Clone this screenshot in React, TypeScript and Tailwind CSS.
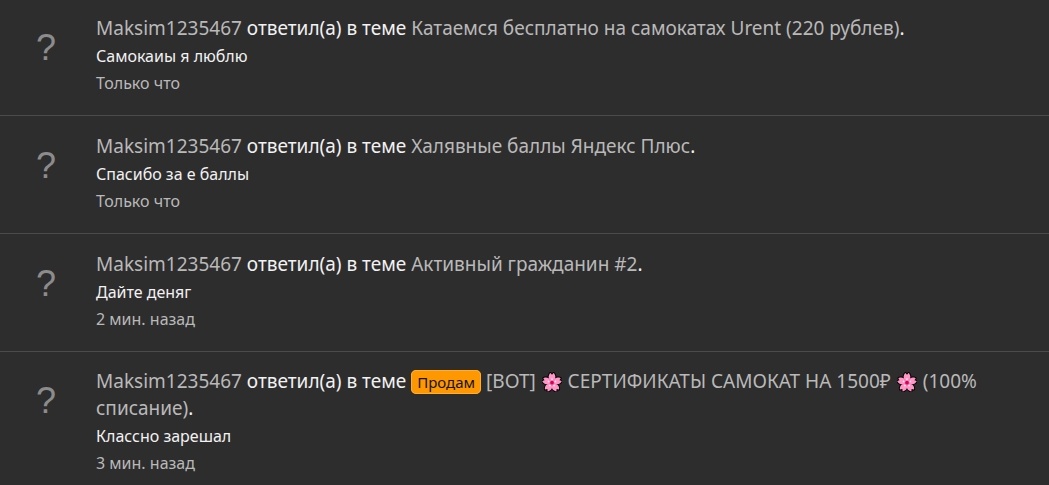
import type { ReactNode } from "react";

type Activity = {
  topic: string;
  prefix?: string;
  title: ReactNode;
  message: string;
  time: string;
};

const petalAngles = [0, 72, 144, 216, 288];
const petal = "M32 34C26 28 19 19 22 11C23 7 25 4 27 3L32 9L37 3C39 4 41 7 42 11C45 19 38 28 32 34Z";

function Blossom() {
  return (
    <svg viewBox="0 0 64 64" className="mx-px inline-block h-5 w-5 align-[-4px]" role="img" aria-label="Сакура">
      {/* dark rim first, so that the petals cover its inner half */}
      {petalAngles.map((angle) => (
        <path
          key={angle}
          d={petal}
          fill="#000"
          stroke="#000"
          strokeWidth="6"
          strokeLinejoin="round"
          transform={`rotate(${angle} 32 34)`}
        />
      ))}
      {petalAngles.map((angle) => (
        <path key={angle} d={petal} fill="#ff96c5" transform={`rotate(${angle} 32 34)`} />
      ))}
      <circle cx="32" cy="34" r="11" fill="#f783b6" />
      {petalAngles.map((angle) => (
        <circle key={angle} cx="32" cy="23" r="3" fill="#ffe3f0" transform={`rotate(${angle} 32 34)`} />
      ))}
      <circle cx="32" cy="34" r="6" fill="#d9005b" />
    </svg>
  );
}

const activities: Activity[] = [
  {
    topic: "urent",
    title: "Катаемся бесплатно на самокатах Urent (220 рублев)",
    message: "Самокаиы я люблю",
    time: "Только что",
  },
  {
    topic: "yandex-plus",
    title: "Халявные баллы Яндекс Плюс",
    message: "Спасибо за е баллы",
    time: "Только что",
  },
  {
    topic: "active-citizen",
    title: "Активный гражданин #2",
    message: "Дайте деняг",
    time: "2 мин. назад",
  },
  {
    topic: "certificates",
    prefix: "Продам",
    title: (
      <>
        [BOT] <Blossom /> СЕРТИФИКАТЫ САМОКАТ НА 1500₽ <Blossom /> (100% списание)
      </>
    ),
    message: "Классно зарешал",
    time: "3 мин. назад",
  },
];

function ActivityRow({ topic, prefix, title, message, time }: Activity) {
  return (
    <li className="flex border-b border-[#4b4b4b] pt-[17px] pb-[18px] first:pt-[15px] last:border-b-0 last:pt-4 last:pb-2">
      <a
        href="#maksim1235467"
        className="w-24 shrink-0 pt-[11px] pl-9 font-['Liberation_Sans',sans-serif] text-[36px] leading-[44px] text-[#8c8c8c]"
      >
        ?
      </a>
      <div className="min-w-0 flex-1 pr-10">
        <h3 className="text-[19px] leading-[27px]">
          <a href="#maksim1235467" className="text-[#b9b9b9]">Maksim1235467</a> ответил(а) в теме{" "}
          <a href={`#${topic}`} className="text-[#b9b9b9]">
            {prefix && (
              <>
                <span className="rounded-[5px] border border-[#ffad33] bg-[#ff9800] px-[5px] py-px text-[15px] leading-5 text-[#141414]">
                  {prefix}
                </span>{" "}
              </>
            )}
            {title}
          </a>
          .
        </h3>
        <p className="text-base leading-[28px]">{message}</p>
        <time className="block text-base leading-[27px] text-[#b9b9b9]">{time}</time>
      </div>
    </li>
  );
}

export default function App() {
  return (
    <main className="min-h-screen bg-[#2d2d2d] font-['Noto_Sans','Open_Sans',sans-serif] text-[#f2f2f2]">
      <ul>
        {activities.map((item) => (
          <ActivityRow key={item.topic} {...item} />
        ))}
      </ul>
    </main>
  );
}
